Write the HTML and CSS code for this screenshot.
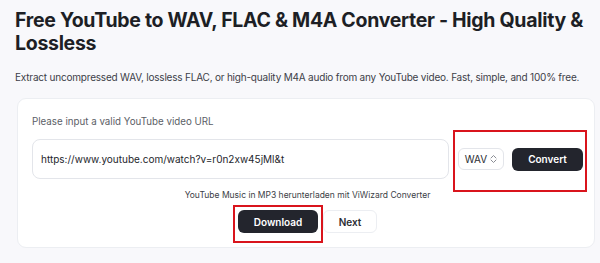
FILE: index.html
```html
<!DOCTYPE html>
<html lang="en">
<head>
<meta charset="utf-8">
<title>YouTube to WAV</title>
<link rel="stylesheet" href="styles.css">
</head>
<body>
<main class="page">
  <h1 class="title">Free YouTube to WAV, FLAC &amp; M4A Converter - High Quality &amp; Lossless</h1>
  <p class="subtitle">Extract uncompressed WAV, lossless FLAC, or high-quality M4A audio from any YouTube video. Fast, simple, and 100% free.</p>
  <section class="card">
    <label class="label" for="url">Please input a valid YouTube video URL</label>
    <div class="row">
      <div class="input" id="url">https://www.youtube.com/watch?v=r0n2xw45jMl&amp;t</div>
      <div class="select">WAV<svg class="chev" width="7" height="10" viewBox="0 0 7 10"><path d="M1 4 L3.5 1.5 L6 4 M1 6 L3.5 8.5 L6 6" fill="none" stroke="#8a8d94" stroke-width="1" stroke-linecap="round" stroke-linejoin="round"/></svg></div>
      <button class="btn dark convert">Convert</button>
    </div>
    <p class="hint">YouTube Music in MP3 herunterladen mit ViWizard Converter</p>
    <div class="actions">
      <button class="btn dark download">Download</button>
      <button class="btn light next">Next</button>
    </div>
    <div class="mark mark-convert"></div>
    <div class="mark mark-download"></div>
  </section>
</main>
</body>
</html>
```
FILE: styles.css
```css
* { box-sizing: border-box; }
html, body { margin: 0; padding: 0; }
body {
  background: #f8f8fb;
  font-family: Inter, "Liberation Sans", sans-serif;
  color: #1d1f25;
  width: 600px;
  height: 263px;
  overflow: hidden;
}
.page { padding: 9px 0 0 15px; }
.title {
  margin: 0;
  font-size: 19.5px;
  line-height: 23px;
  font-weight: 700;
  letter-spacing: -0.3px;
  color: #1d1f25;
  width: 582px;
}
.subtitle {
  margin: 15px 0 0 0;
  font-size: 10px;
  line-height: 14px;
  letter-spacing: -0.2px;
  color: #3d4048;
  white-space: nowrap;
}
.card {
  position: relative;
  margin: 14px 0 0 2px;
  width: 578px;
  height: 150px;
  background: #fff;
  border: 1px solid #eceef2;
  border-radius: 9px;
  padding: 16px 11px 0 14px;
}
.label {
  display: block;
  font-size: 9.75px;
  line-height: 14px;
  color: #5b5e66;
}
.row {
  display: flex;
  align-items: center;
  margin-top: 10px;
}
.input {
  width: 417px;
  height: 40px;
  border: 1px solid #e3e5ea;
  border-radius: 8px;
  padding: 0 8px;
  display: flex;
  align-items: center;
  font-size: 10px;
  color: #24262c;
}
.select {
  margin-left: 9px;
  width: 46px;
  height: 22px;
  border: 1px solid #e3e5ea;
  border-radius: 6px;
  display: flex;
  align-items: center;
  justify-content: center;
  gap: 3px;
  font-size: 10px;
  color: #2b2d33;
}
.chev { display: block; }
.btn {
  font-family: inherit;
  font-weight: 600;
  font-size: 10px;
  border-radius: 6px;
  height: 23px;
  padding: 0;
  cursor: pointer;
}
.dark { background: #23252d; color: #fff; border: none; }
.light { background: #fff; color: #2b2d33; border: 1px solid #eceef2; }
.convert { margin-left: 8px; width: 71px; }
.hint {
  margin: 10px 0 0 0;
  text-align: center;
  font-size: 8.5px;
  line-height: 12px;
  color: #3b3e46;
}
.actions {
  display: flex;
  justify-content: center;
  gap: 5px;
  margin-top: 9px;
}
.download { width: 80px; }
.next { width: 54px; }
.mark {
  position: absolute;
  border: 2px solid #d9141c;
}
.mark-convert { left: 435px; top: 31px; width: 134px; height: 62px; }
.mark-download { left: 215px; top: 106px; width: 90px; height: 38px; }
```
